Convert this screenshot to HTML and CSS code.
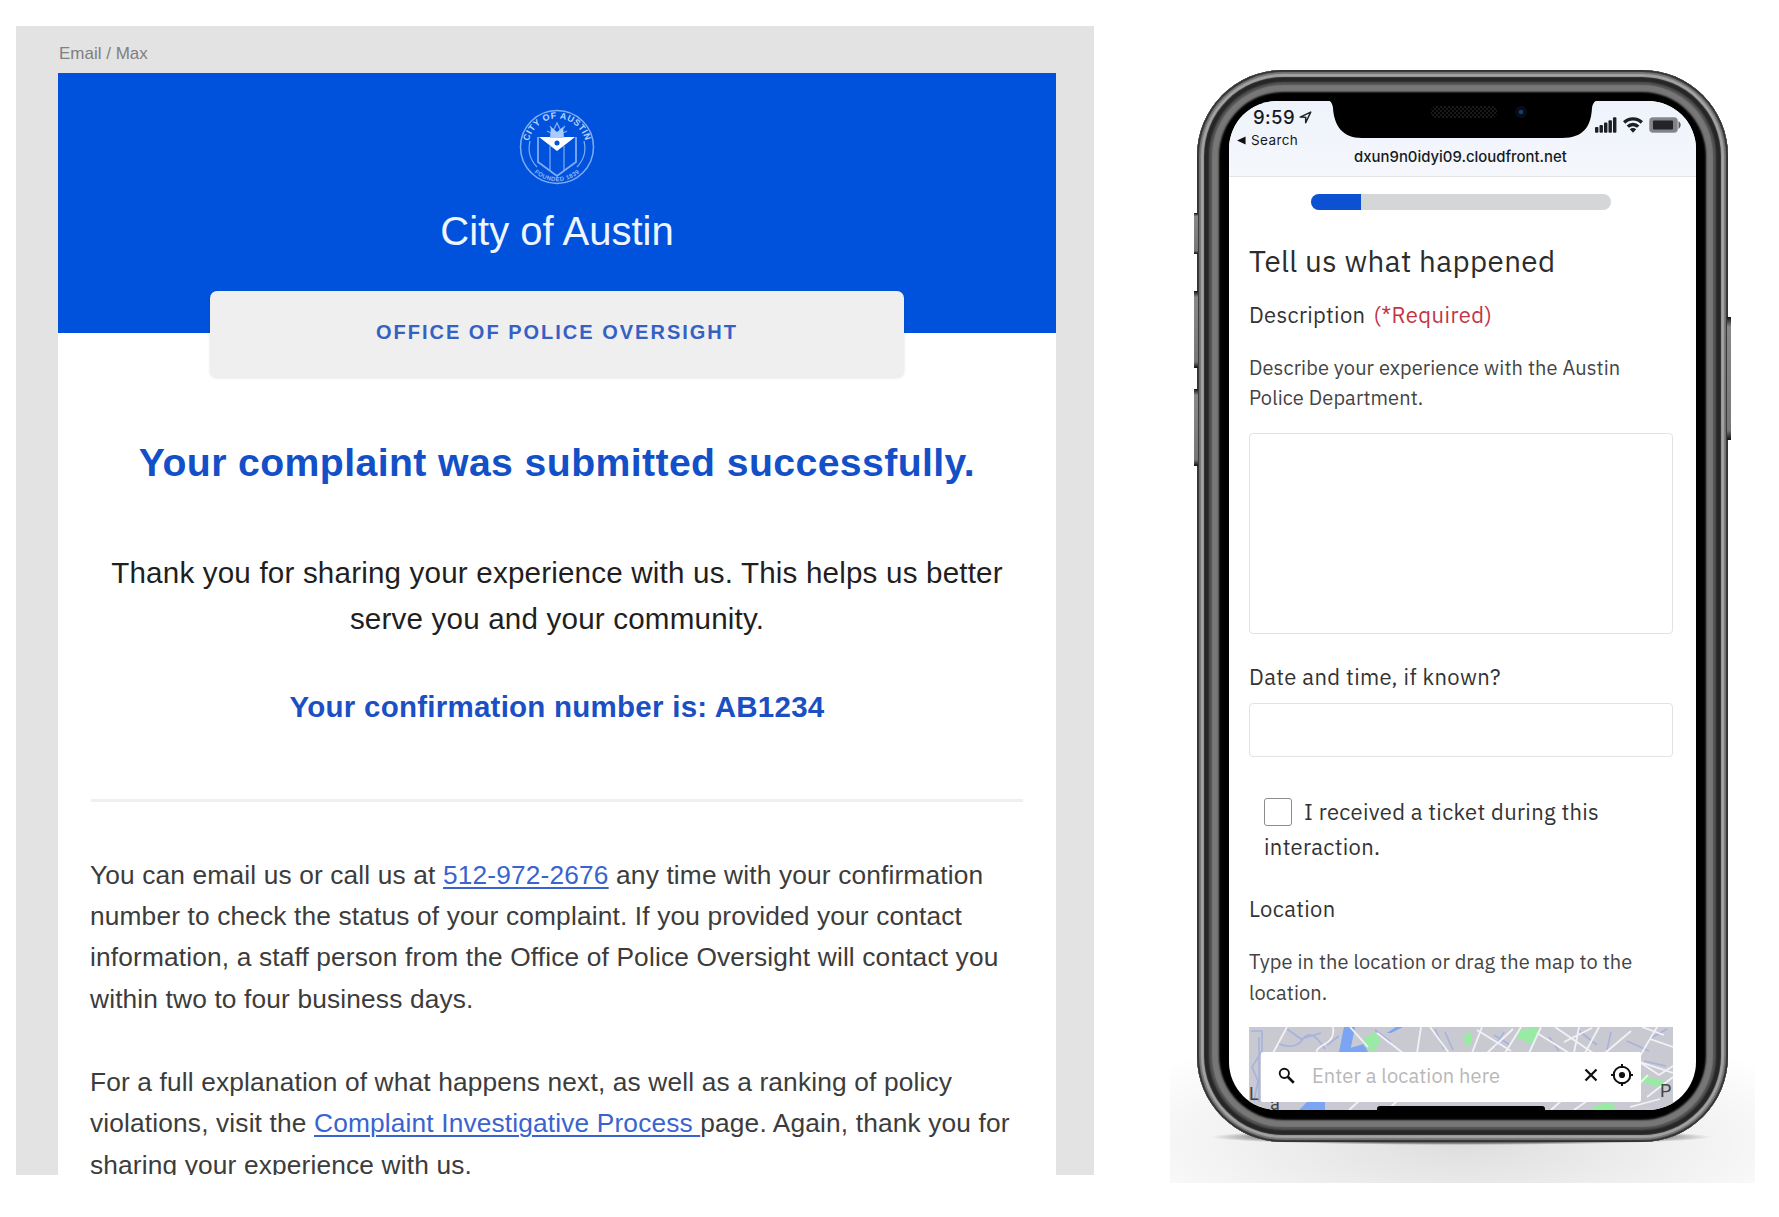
FILE: index.html
```html
<!DOCTYPE html>
<html lang="en">
<head>
<meta charset="utf-8">
<title>Office of Police Oversight</title>
<link rel="stylesheet" href="styles.css">
</head>
<body>
<main class="board">
  <section class="artboard">
    <p class="artboard-name">Email / Max</p>
    <article class="email">
      <header class="email-header">
        <svg class="seal" viewBox="0 0 76 76" aria-hidden="true">
          <defs>
            <path id="arc-top" d="M9.500 44 A29 29 0 1 1 66.500 44"/>
            <path id="arc-bottom" d="M9 56 A34.100 34.100 0 0 0 67 56"/>
          </defs>
          <g fill="none" stroke="#7fadf5">
            <circle cx="38" cy="38" r="36.500" stroke-width="1.500"/>
            <path d="M11 32a28 28 0 0 0 7 26M65 32a28 28 0 0 1-7 26" stroke-width="1.200"/>
            <path d="M19 28v25l19 14 19-14V28" stroke-width="1.800"/>
            <path d="M31 37v25M45 37v25" stroke-width="1.200"/>
            <path d="M31 17l3 5 4-8 4 8 4-5M28 22l6 3M48 22l-6 3" stroke-width="1.300"/>
          </g>
          <path d="M20 28h36L38 42z" fill="#fff"/>
          <path d="M32 18l6 5 6-5 1 11H31z" fill="#a9cbff"/>
          <circle cx="38" cy="34" r="2.500" fill="#0052dc"/>
          <text class="seal-name" text-anchor="middle"><textPath href="#arc-top" startOffset="50%">CITY OF AUSTIN</textPath></text>
          <text class="seal-foot" text-anchor="middle"><textPath href="#arc-bottom" startOffset="50%">FOUNDED 1839</textPath></text>
        </svg>
        <p class="city">City of Austin</p>
      </header>
      <p class="office">OFFICE OF POLICE OVERSIGHT</p>
      <h1 class="title">Your complaint was submitted successfully.</h1>
      <p class="thanks">Thank you for sharing your experience with us. This helps us better<br>serve you and your community.</p>
      <p class="confirmation">Your confirmation number is: AB1234</p>
      <hr class="rule">
      <p class="copy">You can email us or call us at <a href="#">512-972-2676</a> any time with your confirmation<br>number to check the status of your complaint. If you provided your contact<br>information, a staff person from the Office of Police Oversight will contact you<br>within two to four business days.</p>
      <p class="copy">For a full explanation of what happens next, as well as a ranking of policy<br>violations, visit the <a href="#">Complaint Investigative Process </a>page. Again, thank you for<br>sharing your experience with us.</p>
    </article>
  </section>

  <section class="stage">
    <div class="phone">
      <i class="key key-mute"></i><i class="key key-up"></i><i class="key key-down"></i><i class="key key-power"></i>
      <div class="screen">
        <div class="browser-bar">
          <div class="status">
            <div class="status-left">
              <p class="time">9:59
                <svg width="13" height="13" viewBox="0 0 14 14"><path d="M1.200 6.600L12.600 1.200 7.200 12.600V6.700z" fill="none" stroke="#222" stroke-width="1.600" stroke-linejoin="round"/></svg>
              </p>
              <p class="back"><svg width="9" height="9" viewBox="0 0 10 9"><path d="M0 4.500L9.500 0v9z" fill="#111"/></svg>Search</p>
            </div>
            <div class="status-right">
              <svg width="22" height="16" viewBox="0 0 23 16" fill="#1c1f24"><rect x="0" y="10" width="3.600" height="6" rx="1"/><rect x="4.700" y="8" width="3.600" height="8" rx="1"/><rect x="9.400" y="5.500" width="3.600" height="10.500" rx="1"/><rect x="14.100" y="3" width="3.600" height="13" rx="1"/><rect x="18.800" y="0" width="3.600" height="16" rx="1"/></svg>
              <svg width="20" height="16" viewBox="0 0 20 16" fill="none" stroke="#1c1f24" stroke-width="3.400"><path d="M1.200 5.500a12.500 12.500 0 0 1 17.600 0"/><path d="M4.800 9.600a7.400 7.400 0 0 1 10.400 0"/><path d="M10 15.800l-3.200-3.500a4.500 4.500 0 0 1 6.400 0z" fill="#1c1f24" stroke="none"/></svg>
              <svg width="32" height="16" viewBox="0 0 32 16"><rect x="1" y="1" width="27" height="14" rx="3" fill="#808388" stroke="#85888d" stroke-width="1.500"/><rect x="4" y="3.500" width="20" height="9" rx="1" fill="#222427"/><path d="M29.500 4q2.200 1.500 2.200 4t-2.200 4z" fill="#55585c"/></svg>
            </div>
          </div>
          <p class="url">dxun9n0idyi09.cloudfront.net</p>
        </div>
        <svg class="notch" viewBox="0 0 274 38" aria-hidden="true">
          <defs><pattern id="mesh" width="4" height="4" patternUnits="userSpaceOnUse"><circle cx="1" cy="1" r=".9" fill="#242424"/><circle cx="3" cy="3" r=".9" fill="#242424"/></pattern></defs>
          <path d="M0 0q6 0 7 8c1 17 9 30 29 30h200c22 0 29-12 30-30q1-8 8-8z"/>
          <rect x="105" y="6" width="66" height="12" rx="5" fill="url(#mesh)"/>
          <circle cx="195" cy="12" r="6" fill="#060d1a"/><circle cx="195" cy="12" r="2.300" fill="#1d3a6c"/>
        </svg>
        <form class="form">
          <div class="progress"><span style="width: 16.500%"></span></div>
          <h2 class="form-title">Tell us what happened</h2>
          <p class="label description"><span>Description</span><span class="required">(*Required)</span></p>
          <p class="hint hint-police">Describe your experience with the Austin<br>Police Department.</p>
          <div class="field field-area"></div>
          <p class="label date">Date and time, if known?</p>
          <div class="field field-line"></div>
          <p class="label check"><span class="checkbox"></span>I received a ticket during this<br><span class="check-rest">interaction.</span></p>
          <p class="label place">Location</p>
          <p class="hint hint-map">Type in the location or drag the map to the<br>location.</p>
          <div class="map">
            <svg class="map-art" viewBox="0 0 424 83" aria-hidden="true">
              <rect width="424" height="83" fill="#c9c9d1"/>
              <g fill="#7ba4f4"><path d="M95 0h11l-5 25H90z"/><path d="M142 6l12-6h-7l-9 6zM101 21l14-4 4 8h-20zM50 83l8-8h18v8z"/></g>
              <g fill="#98eaa4"><path d="M114 12l12-7 6 9-8 11-9-6zM268 3l20-3 1 6-5 12-15-7zM215 8l7-3v12l-6 2zM393 48l26 7-6 6-22-6zM345 79l18-4 4 8h-22z"/></g>
              <g fill="none" stroke="#a8b2dc" stroke-width="1.600"><path d="M2 4h11v20L3 40l6 14-4 20M10 10v65M28 16q18 8 26-4t22 10M38 2l14 10 20-6M78 18l12-9M126 3l16 12M186 2l9 20M196 5l8 18M245 8l16 10M246 20l9-15M330 4l18 14M362 5l-4 18M378 14l22 10M395 34l22 5M300 10l10 14M400 12l18-10"/></g>
              <g fill="none" stroke="#f2f2f6" stroke-width="1.800"><path d="M38 0L24 26M84 0q2 12-8 17t-8 9M101 0l18 20M128 6l26 20M172 0l-4 26M181 0l19 26M233 0l-10 26M228 3l34 21M272 0l-16 26M238 26l26-24M292 0l-12 26M288 6l32 20M306 0l38 26M315 15l28-14M330 0l-5 26M350 0l-14 26M382 4l-26 22M393 0l22 8M408 0l-20 34 36 12M401 12l23 8M392 36l18 12 14-9M381 66l18-18M398 70l26-20M100 83l10-9M139 83l9-9M302 83l10-9M325 83l13-9M381 80l30-8"/></g>
              <text x="0" y="73" class="map-name">L</text><text x="21" y="83" class="map-name">a</text><text x="411" y="70" class="map-name">P</text>
            </svg>
            <div class="search">
              <svg width="17" height="17" viewBox="0 0 18 18" fill="none" stroke="#111"><circle cx="6.700" cy="6.700" r="4.900" stroke-width="2"/><path d="M10.300 10.300l6.400 6.400" stroke-width="2.800"/></svg>
              <span class="placeholder">Enter a location here</span>
              <svg class="clear" width="14" height="14" viewBox="0 0 14 14"><path d="M1.500 1.500l11 11m0-11l-11 11" stroke="#111" stroke-width="2.300"/></svg>
              <svg width="24" height="24" viewBox="0 0 24 24" fill="none" stroke="#111" stroke-width="2"><circle cx="12" cy="12" r="8.300"/><path d="M12 1v4M12 19v4M1 12h4M19 12h4"/><circle cx="12" cy="12" r="3.100" fill="#111" stroke="none"/></svg>
            </div>
          </div>
        </form>
        <i class="home-bar"></i>
      </div>
    </div>
  </section>
</main>
</body>
</html>
```
FILE: styles.css
```css
* { box-sizing: border-box; }
body { margin: 0; background: #fff; overflow: hidden; }
p, h1, h2, hr { margin: 0; }
svg { display: block; flex: none; }

.board { display: flex; align-items: flex-start; height: 1217px; padding: 26px 0 0 16px; }

/* Email artboard */
.artboard {
  width: 1078px; height: 1149px; padding: 0 38px 0 42px; overflow: hidden; flex: none;
  background: #e3e3e3; font-family: "Liberation Sans", Arial, sans-serif;
}
.artboard-name { height: 46.500px; padding: 17.500px 0 0 1px; font-size: 17px; line-height: 20px; color: #808080; }
.email { height: 1110px; background: #fff; display: flex; flex-direction: column; align-items: center; }
.email-header {
  width: 100%; height: 260px; flex: none; padding-top: 36.500px; background: #0052dc;
  display: flex; flex-direction: column; align-items: center;
}
.seal { width: 76px; height: 76px; }
.seal-name { font: bold 9px "Liberation Sans", Arial, sans-serif; letter-spacing: .5px; fill: #b6d3ff; }
.seal-foot { font: bold 6px "Liberation Sans", Arial, sans-serif; letter-spacing: .4px; fill: #8db8f8; }
.city { margin-top: 24px; font-size: 40px; line-height: 44px; color: #eef6ff; white-space: nowrap; }
.office {
  width: 694px; height: 86px; margin-top: -42px; padding-bottom: 3px; flex: none;
  display: flex; align-items: center; justify-content: center;
  border-radius: 7px; background: #efefef; box-shadow: 0 1px 3px rgba(0,0,0,.12);
  font-size: 20px; font-weight: bold; letter-spacing: 2px; color: #3560c4;
}
.title { margin-top: 63px; font-size: 39.200px; line-height: 46px; letter-spacing: .4px; color: #1350c8; white-space: nowrap; }
.thanks { margin-top: 64px; font-size: 29.600px; line-height: 46px; letter-spacing: .18px; color: #1f1f1f; text-align: center; white-space: nowrap; }
.confirmation { margin-top: 45px; font-size: 29.500px; font-weight: bold; line-height: 40px; letter-spacing: .25px; color: #1a50c4; white-space: nowrap; }
.rule { width: 932px; height: 3px; margin: 72px 0 53px; flex: none; border: 0; background: #efefef; }
.copy { width: 934px; margin-bottom: 41.450px; font-size: 26.300px; line-height: 41.450px; letter-spacing: .15px; color: #3c3c3c; white-space: nowrap; }
.copy a { color: #3a63cf; text-decoration: underline; text-decoration-thickness: 1.500px; text-underline-offset: 3px; }

/* Phone */
.stage {
  width: 585px; height: 1157px; margin-left: 76px; padding: 44px 0 0 27px; flex: none;
  background:
    radial-gradient(ellipse 250px 8px at 291px 1111px, rgba(0,0,0,.85), rgba(0,0,0,.5) 75%, transparent),
    radial-gradient(ellipse 400px 120px at 292px 1118px, rgba(0,0,0,.13), rgba(0,0,0,.05) 60%, transparent);
}
.phone {
  position: relative; width: 531px; height: 1072px; padding: 31px 32px 32px;
  border-radius: 86px; background: #000;
  box-shadow:
    inset 0 0 1px 2px #333,
    inset 0 0 1px 4px #777,
    inset 0 0 1px 7px #a4a4a4,
    inset 0 0 2px 12px #262626,
    inset 0 0 1px 15px #555,
    inset 0 0 2px 22px #777;
}
.key { position: absolute; width: 4px; background: linear-gradient(#111, #888 8%, #777 92%, #111); }
.key-mute { left: -3px; top: 143px; height: 41px; }
.key-up { left: -3px; top: 221px; height: 77px; }
.key-down { left: -3px; top: 319px; height: 77px; }
.key-power { right: -3px; top: 247px; height: 123px; }
.screen {
  position: relative; height: 1009px; overflow: hidden; border-radius: 48px; background: #fff;
  font-family: "IBM Plex Sans", Roboto, sans-serif; color: #333;
}
.browser-bar { height: 76px; background: linear-gradient(#eef3fb, #f5f7fb); border-bottom: 1px solid #e2e4e8; font-family: Inter, sans-serif; color: #17191d; }
.status { display: flex; justify-content: space-between; height: 50px; padding: 4px 15px 0 8px; }
.time { display: flex; align-items: center; gap: 4px; padding-left: 16px; font-size: 18.500px; font-weight: 500; line-height: 24px; letter-spacing: .4px; }
.back { display: flex; align-items: center; gap: 5px; font-size: 13.500px; line-height: 23px; letter-spacing: .4px; }
.status-right { display: flex; gap: 6px; padding-top: 12px; }
.url { padding-right: 4px; font-size: 14.900px; font-weight: 500; line-height: 13px; text-align: center; }
.notch { position: absolute; left: 97px; top: -1px; width: 274px; height: 38px; }

.form { padding: 17px 23px 0 20px; white-space: nowrap; }
.progress { width: 300px; height: 16px; margin-left: 62px; overflow: hidden; border-radius: 8px; background: #d4d6d8; }
.progress span { display: block; height: 100%; background: #0b51d2; }
.form-title { margin-top: 33px; font-size: 29.600px; font-weight: 400; line-height: 36px; letter-spacing: .38px; color: #2c2c2c; }
.label { font-size: 22px; line-height: 28px; letter-spacing: .32px; }
.description { display: flex; gap: 8px; margin-top: 22px; }
.required { color: #c33545; letter-spacing: .45px; }
.hint { font-size: 20px; line-height: 30.500px; letter-spacing: .11px; color: #444; }
.hint-police { margin: 23.500px 0 19.500px; }
.field { border: 1.500px solid #e2e2e2; border-radius: 4px; }
.field-area { height: 201px; }
.date { margin: 29px 0 12px; letter-spacing: .38px; }
.field-line { height: 54px; }
.check { height: 69px; margin-top: 36.500px; padding-left: 15px; line-height: 35px; }
.checkbox { display: inline-block; width: 28px; height: 28px; margin: -4px 12px -4px 0; vertical-align: -2px; border: 1.500px solid #8c8c8c; border-radius: 3px; }
.place { margin-top: 32.500px; }
.hint-map { margin: 24px 0 19px; }
.map { position: relative; height: 83px; }
.map-art { width: 424px; height: 83px; }
.map-name { font: 18px Roboto, sans-serif; fill: #444; }
.search {
  position: absolute; left: 12px; top: 25px; width: 380px; height: 50px; padding: 0 7px 4px 17px;
  display: flex; align-items: center; background: #fff; border-radius: 2px;
}
.placeholder { flex: 1; padding: 1px 0 0 17px; font-size: 20px; letter-spacing: .12px; color: #b8b8b8; }
.clear { margin-right: 12px; }
.home-bar { position: absolute; left: 148px; bottom: 0; width: 168px; height: 4px; border-radius: 3px 3px 0 0; background: #000; }
```
